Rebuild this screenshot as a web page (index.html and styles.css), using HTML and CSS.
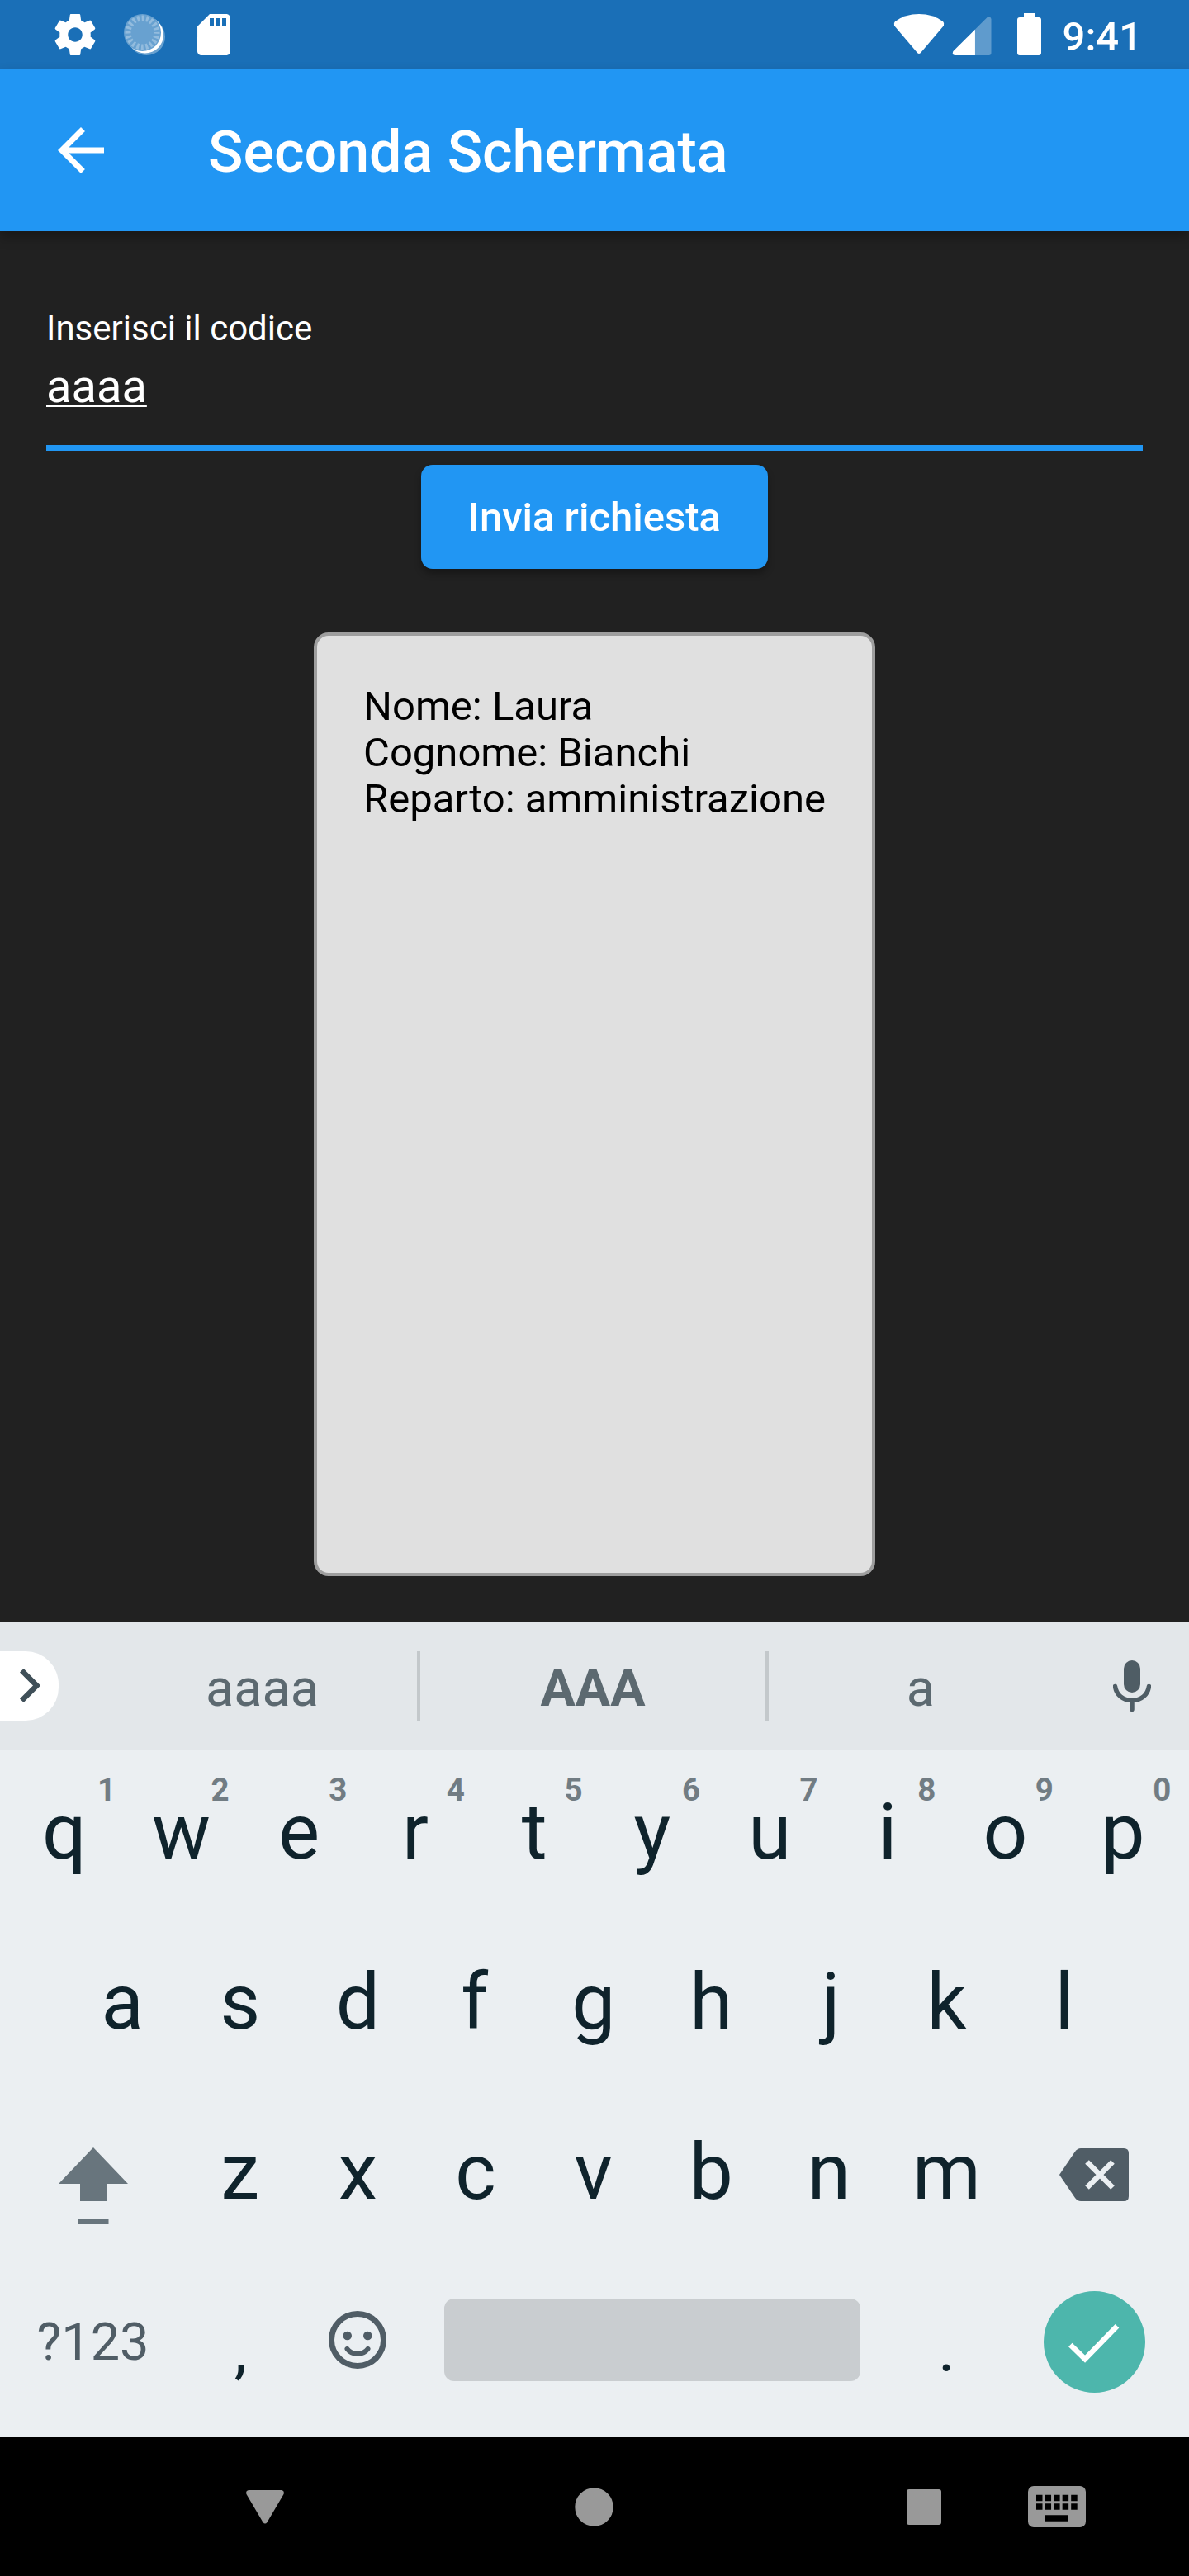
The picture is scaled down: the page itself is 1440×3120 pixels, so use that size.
FILE: index.html
```html
<!DOCTYPE html>
<html lang="it">
<head>
<meta charset="utf-8">
<title>Seconda Schermata</title>
<link rel="stylesheet" href="styles.css">
</head>
<body>
<div class="screen">
  <div class="status">
    <div class="status-left">
      <svg class="gear" width="60" height="60" viewBox="0 0 24 24" fill="#fff"><path d="M19.43 12.98c.04-.32.07-.64.07-.98s-.03-.66-.07-.98l2.11-1.65c.19-.15.24-.42.12-.64l-2-3.46c-.12-.22-.39-.3-.61-.22l-2.49 1c-.52-.4-1.08-.73-1.69-.98l-.38-2.65C14.46 2.18 14.25 2 14 2h-4c-.25 0-.46.18-.49.42l-.38 2.65c-.61.25-1.17.59-1.69.98l-2.49-1c-.23-.09-.49 0-.61.22l-2 3.46c-.13.22-.07.49.12.64l2.11 1.65c-.04.32-.07.65-.07.98s.03.66.07.98l-2.11 1.65c-.19.15-.24.42-.12.64l2 3.46c.12.22.39.3.61.22l2.49-1c.52.4 1.08.73 1.69.98l.38 2.65c.03.24.24.42.49.42h4c.25 0 .46-.18.49-.42l.38-2.65c.61-.25 1.17-.59 1.69-.98l2.49 1c.23.09.49 0 .61-.22l2-3.46c.12-.22.07-.49-.12-.64l-2.11-1.65zM12 15.5c-1.930 0-3.500-1.570-3.500-3.500s1.570-3.500 3.500-3.500 3.500 1.570 3.500 3.500-1.570 3.500-3.500 3.500z"/></svg>
      <svg class="disc" width="50" height="50" viewBox="0 0 50 50">
        <circle cx="27.500" cy="27.500" r="22.500" fill="#68a1d0"/>
        <circle cx="25.700" cy="25.200" r="22.300" fill="#fff"/>
        <circle cx="22.500" cy="22.500" r="22.500" fill="#68a1d0"/>
        <circle cx="22.500" cy="22.500" r="17.500" fill="none" stroke="#93bcde" stroke-width="7" stroke-dasharray="2.800 2.698" stroke-dashoffset="1.400"/>
      </svg>
      <svg width="40" height="50" viewBox="4 2 16 20" fill="#fff"><path d="M18 2h-8L4.020 8 4 20c0 1.100.9 2 2 2h12c1.100 0 2-.9 2-2V4c0-1.100-.9-2-2-2zm-6 6h-2V4h2v4zm3 0h-2V4h2v4zm3 0h-2V4h2v4z"/></svg>
    </div>
    <div class="status-right">
      <svg width="62" height="50" viewBox="0 0 62 50" fill="#fff"><path d="M2 9Q14 0 31 0T60 9Q62 11 61 14L33 47Q31 49 29 47L1 14Q0 11 2 9Z"/></svg>
      <svg class="signal" width="48" height="48" viewBox="0 0 48 48"><path d="M1 43 43 1Q47 -1 48 3V45Q48 48 45 48H3Q-1 47 1 43Z" fill="#5f9bcd"/><path d="M1 43 28 16V48H3Q-1 47 1 43Z" fill="#fff"/></svg>
      <svg class="battery" width="29" height="51" viewBox="0 0 29 51" fill="#fff"><path d="M8 0H21V5H26Q29 5 29 8V48Q29 51 26 51H3Q0 51 0 48V8Q0 5 3 5H8Z"/></svg>
      <span class="clock">9:41</span>
    </div>
  </div>
  <header class="appbar">
    <svg width="84" height="84" viewBox="0 0 24 24" fill="#fff"><path d="M20 11H7.830l5.590-5.590L12 4l-8 8 8 8 1.410-1.410L7.830 13H20v-2z"/></svg>
    <h1 class="title">Seconda Schermata</h1>
  </header>
  <main class="content">
    <div class="field">
      <div class="label">Inserisci il codice</div>
      <div class="value"><span class="composing">aaaa</span></div>
    </div>
    <div class="button">Invia richiesta</div>
    <div class="card">Nome: Laura<br>Cognome: Bianchi<br>Reparto: amministrazione</div>
  </main>
  <section class="keyboard">
    <div class="suggestions">
      <div class="expand"><svg width="26" height="41" viewBox="0 0 26 41" fill="none" stroke="#3f4f58" stroke-width="6.500"><path d="M2.300 2.300 20.500 20.500 2.300 38.700"/></svg></div>
      <div class="word first">aaaa</div>
      <div class="divider"></div>
      <div class="word bold">AAA</div>
      <div class="divider"></div>
      <div class="word last">a</div>
      <svg class="mic" width="46" height="62" viewBox="0 0 46 62"><rect x="13" y="0" width="20" height="39" rx="10" fill="#4f5d65"/><path d="M2.500 31.500C4 42 12 48.500 23 48.500S42 42 43.500 31.500M23 49V59.500" fill="none" stroke="#4f5d65" stroke-width="5.500" stroke-linecap="round"/></svg>
    </div>
    <div class="row">
      <div class="key edge">q<span class="hint">1</span></div><div class="key">w<span class="hint">2</span></div><div class="key">e<span class="hint">3</span></div><div class="key left">r<span class="hint">4</span></div><div class="key">t<span class="hint">5</span></div><div class="key">y<span class="hint">6</span></div><div class="key">u<span class="hint">7</span></div><div class="key">i<span class="hint">8</span></div><div class="key">o<span class="hint">9</span></div><div class="key">p<span class="hint">0</span></div>
    </div>
    <div class="row middle">
      <div class="key">a</div><div class="key">s</div><div class="key">d</div><div class="key left">f</div><div class="key">g</div><div class="key">h</div><div class="key right">j</div><div class="key">k</div><div class="key">l</div>
    </div>
    <div class="row">
      <div class="key wide shift"><svg width="84" height="93" viewBox="0 0 84 93" fill="#68757d"><path d="M42 0 84 44H58V65H26V44H0ZM23.500 87H60.500V93H23.500Z"/></svg></div>
      <div class="key">z</div><div class="key">x</div><div class="key">c</div><div class="key">v</div><div class="key">b</div><div class="key">n</div><div class="key">m</div>
      <div class="key wide back"><svg width="84" height="64" viewBox="0 0 84 64"><path d="M26 0H78Q84 0 84 6V58Q84 64 78 64H26Q22 64 19 60L0 32 19 4Q22 0 26 0Z" fill="#505d66"/><path d="M33.500 16.500 64.500 47.500M64.500 16.500 33.500 47.500" stroke="#ebeff2" stroke-width="6.500"/></svg></div>
    </div>
    <div class="row">
      <div class="key wide symbols">?123</div>
      <div class="key punct">,</div>
      <div class="key smile"><svg width="70" height="70" viewBox="0 0 70 70" fill="#505d66"><circle cx="35" cy="35" r="31.500" fill="none" stroke="#505d66" stroke-width="7"/><circle cx="22.700" cy="30" r="5.300"/><circle cx="47.300" cy="30" r="5.300"/><path d="M22.500 46Q27 52 35 52T47.500 46" fill="none" stroke="#505d66" stroke-width="6" stroke-linecap="round"/></svg></div>
      <div class="space"></div>
      <div class="key punct">.</div>
      <div class="key wide go"><div class="enter"><svg width="62" height="47" viewBox="0 0 62 47" fill="none" stroke="#fff" stroke-width="6.500"><path d="M2.300 25 20 42.200 59 2.300"/></svg></div></div>
    </div>
  </section>
  <nav class="nav">
    <svg class="nav-back" width="46" height="41" viewBox="0 0 46 41" fill="#999"><path d="M3 0H43Q47 1 45.500 5L25.500 39Q23 42 20.500 39L.5 5Q-1 1 3 0Z"/></svg>
    <svg class="nav-home" width="47" height="47" viewBox="0 0 47 47" fill="#999"><circle cx="23.500" cy="23.500" r="23.200"/></svg>
    <svg class="nav-recent" width="42" height="43" viewBox="0 0 42 43" fill="#999"><rect width="42" height="43" rx="3"/></svg>
    <svg class="nav-ime" width="70" height="50" viewBox="0 0 70 50"><rect width="70" height="50" rx="7" fill="#999"/><path d="M10 14.500H60M10 25H60" stroke="#000" stroke-width="7.500" stroke-dasharray="7.500 3.050"/><path d="M21 39H49" stroke="#000" stroke-width="7.500"/></svg>
  </nav>
</div>
</body>
</html>
```
FILE: styles.css
```css
* { box-sizing: border-box; }
body { margin: 0; background: #212121; font-family: Roboto, sans-serif; }
svg { display: block; flex: none; }
.screen { width: 1440px; height: 3120px; display: flex; flex-direction: column; overflow: hidden; background: #212121; }

.status { height: 84px; flex: none; display: flex; justify-content: space-between; background: #1a6fb7; color: #fff; }
.status-left { display: flex; align-items: center; padding-left: 61px; }
.disc { margin: 0 39px 0 29px; }
.status-right { display: flex; padding: 17px 57px 0 0; }
.signal { margin: 3px 0 0 9px; height: 47px; }
.battery { margin: -1px 0 0 31px; }
.clock { margin-left: 26px; font-size: 49px; font-weight: 500; line-height: 57px; margin-top: -1px; }

.appbar { height: 196px; flex: none; display: flex; align-items: center; padding: 0 56px; background: #2196f3; position: relative; box-shadow: 0 7px 14px rgba(0, 0, 0, .3); }
.title { margin: 4px 0 0 112px; color: #fff; font-size: 70px; font-weight: 500; white-space: nowrap; }

.content { height: 1685px; flex: none; padding: 89px 56px 0; display: flex; flex-direction: column; align-items: center; }
.field { width: 1328px; height: 177px; border-bottom: 7px solid #2196f3; color: #fff; }
.label { font-size: 42px; line-height: 49px; padding-top: 4px; }
.value { font-size: 56px; line-height: 66px; margin-top: 13px; }
.composing { text-decoration: underline; text-decoration-thickness: 3px; text-underline-offset: 3px; }
.button { margin-top: 17px; width: 420px; height: 126px; flex: none; border-radius: 14px; background: #2196f3; color: #fff; font-size: 49px; font-weight: 500; line-height: 128px; text-align: center; box-shadow: 0 6px 9px rgba(0, 0, 0, .3); white-space: nowrap; }
.card { margin-top: 77px; width: 680px; height: 1143px; flex: none; border: 4px solid #9e9e9e; border-radius: 18px; background: #e0e0e0; color: #000; padding: 58px 0 0 56px; font-size: 49px; line-height: 56px; white-space: nowrap; }

.keyboard { height: 987px; flex: none; background: #ebeff2; }
.suggestions { height: 154px; display: flex; align-items: center; background: #e3e7ea; color: #5c6970; font-size: 63px; padding-bottom: 1px; }
.expand { width: 71px; height: 84px; border-radius: 0 40px 40px 0; background: #fff; display: flex; align-items: center; padding-left: 24px; }
.word { text-align: center; margin-top: 5px; }
.first { width: 368px; margin-left: 66px; padding-right: 7px; }
.bold { width: 418px; font-weight: 700; }
.last { width: 368px; }
.divider { width: 4px; height: 84px; background: #c3c8cb; }
.mic { margin-left: 49px; }

.row { height: 206px; display: flex; padding: 0 8.500px 0 5.500px; }
.middle { padding-left: 77px; }
.key { position: relative; width: 142.600px; flex: none; display: flex; align-items: center; justify-content: center; padding-bottom: 7px; font-size: 94.500px; color: #0f232c; }
.wide { width: 214px; }
.left { padding-right: 3px; }
.right { padding-left: 5px; }
.edge { padding-left: 2px; }
.hint { position: absolute; top: 25px; right: 13px; font-size: 38.500px; line-height: 48px; font-weight: 700; color: #717c83; }
.edge .hint { right: 8px; }
.shift { padding: 27px 0 0; }
.back { padding: 0 0 0 1px; }
.go { padding-left: 2px; }
.symbols { font-size: 63px; color: #505d66; }
.punct { font-size: 77px; padding: 11px 0 0 1px; }
.smile { padding-bottom: 12px; }
.space { width: 504px; height: 100px; margin: 47px 33px 0; flex: none; border-radius: 12px; background: #c9cdd0; }
.enter { width: 123px; height: 123px; flex: none; border-radius: 50%; background: #4db6ac; display: flex; align-items: center; justify-content: center; padding-top: 3px; }

.nav { height: 168px; flex: none; display: flex; align-items: center; background: #000; padding-left: 298px; }
.nav-home { margin-left: 352px; }
.nav-recent { margin-left: 355px; }
.nav-ime { margin-left: 105px; }
```
